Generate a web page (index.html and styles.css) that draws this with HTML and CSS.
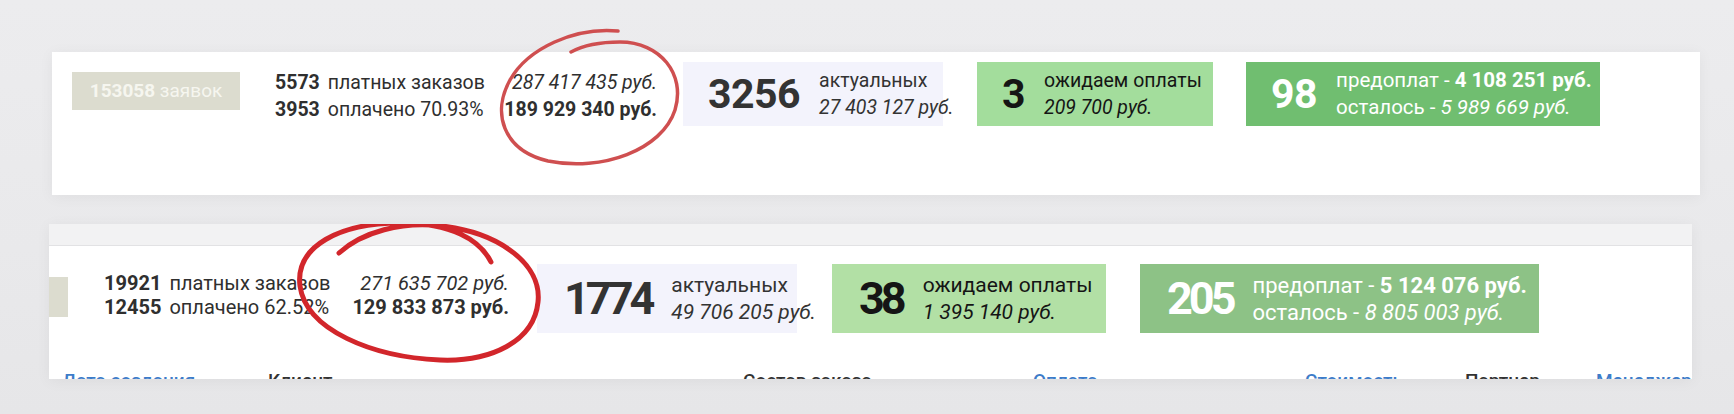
FILE: index.html
```html
<!DOCTYPE html>
<html lang="ru">
<head>
    <meta charset="UTF-8">
    <title>Статистика заказов</title>
    <link rel="stylesheet" href="styles.css">
</head>
<body>
    <div class="page">
        <section class="panel panel-top">
            <div class="stats">
                <div class="requests"><b>153058</b> заявок</div>
                <div class="orders">
                    <b>5573</b><span>платных заказов</span><i>287 417 435 руб.</i>
                    <b>3953</b><span>оплачено 70.93%</span><b class="sum">189 929 340 руб.</b>
                </div>
                <div class="card card-active">
                    <div class="card-num">3256</div>
                    <div class="card-text">актуальных<br><i>27 403 127 руб.</i></div>
                </div>
                <div class="card card-waiting">
                    <div class="card-num">3</div>
                    <div class="card-text">ожидаем оплаты<br><i>209 700 руб.</i></div>
                </div>
                <div class="card card-prepaid">
                    <div class="card-num">98</div>
                    <div class="card-text">предоплат - <b>4 108 251 руб.</b><br>осталось - <i>5 989 669 руб.</i></div>
                </div>
            </div>
            <!-- hand-drawn marker circle -->
            <svg class="mark mark-top" width="200" height="150" viewBox="486 22 200 150">
                <path d="M618,31 C575,27 528,48 510,80 C492,112 502,150 548,161 C602,172 662,150 675,110 C686,74 660,42 620,42 C600,42 582,46 571,52"/>
            </svg>
        </section>

        <section class="panel panel-bottom">
            <div class="panel-head"></div>
            <div class="stats">
                <div class="requests"><b>82110</b> заявок</div>
                <div class="orders">
                    <b>19921</b><span>платных заказов</span><i>271 635 702 руб.</i>
                    <b>12455</b><span>оплачено 62.52%</span><b class="sum">129 833 873 руб.</b>
                </div>
                <div class="card card-active">
                    <div class="card-num">1774</div>
                    <div class="card-text">актуальных<br><i>49 706 205 руб.</i></div>
                </div>
                <div class="card card-waiting">
                    <div class="card-num">38</div>
                    <div class="card-text">ожидаем оплаты<br><i>1 395 140 руб.</i></div>
                </div>
                <div class="card card-prepaid">
                    <div class="card-num">205</div>
                    <div class="card-text">предоплат - <b>5 124 076 руб.</b><br>осталось - <i>8 805 003 руб.</i></div>
                </div>
            </div>
            <div class="table-head">
                <span class="col col-date link">Дата создания</span>
                <span class="col col-client">Клиент</span>
                <span class="col col-items">Состав заказа</span>
                <span class="col col-pay link">Оплата</span>
                <span class="col col-cost link">Стоимость</span>
                <span class="col col-partner">Партнер</span>
                <span class="col col-manager link">Менеджер</span>
            </div>
            <svg class="mark mark-bottom" width="260" height="150" viewBox="290 218 260 150">
                <path d="M339,253 C362,232 402,221 442,226 C502,233 542,266 538,302 C534,342 490,362 440,360 C372,357 306,330 300,286 C295,246 340,223 400,223 C452,223 480,240 491,262"/>
            </svg>
        </section>
    </div>
</body>
</html>
```

FILE: styles.css
```css
body {
    margin: 0;
    font-family: Roboto, "Noto Sans", sans-serif;
    color: #2f2f2f;
    background: linear-gradient(180deg, #ececee 0%, #e9e9eb 60%, #e6e6e8 100%);
    height: 414px;
    overflow: hidden;
}

.page {
    padding: 52px 0 0 52px;
}

.panel {
    position: relative;
    background-color: #fff;
    box-shadow: 0 2px 14px rgba(0, 0, 0, 0.05);
}

.panel-top {
    width: 1648px;
    height: 143px;
    margin-bottom: 29px;
}

.panel-bottom {
    width: 1643px;
    height: 155px;
    margin-left: -3px;
    overflow: hidden;
}

.panel-head {
    height: 21px;
    background-color: #f2f2f3;
    border-bottom: 1px solid #e2e2e4;
}

.stats {
    display: flex;
    align-items: flex-start;
}

.panel-top .stats {
    padding: 10px 0 0 20px;
}

.panel-bottom .stats {
    padding: 18px 0 0 0;
}

/* requests badge */
.requests {
    flex: none;
    box-sizing: border-box;
    background-color: #dcdccf;
    color: #f6f6ef;
    font-size: 19px;
    line-height: 38px;
    text-align: center;
}

.panel-top .requests {
    width: 168px;
    height: 38px;
    margin-top: 10px;
}

.panel-bottom .requests {
    width: 170px;
    height: 40px;
    margin-top: 13px;
    margin-left: -151px;
}

/* orders summary */
.orders {
    flex: none;
    display: grid;
    grid-template-columns: auto auto 1fr;
    column-gap: 8px;
}

.orders i {
    text-align: right;
}

.orders .sum {
    text-align: right;
}

.panel-top .orders {
    width: 382px;
    margin: 7px 0 0 35px;
    font-size: 19.5px;
    line-height: 27px;
}

.panel-bottom .orders {
    width: 405px;
    margin: 7px 0 0 36px;
    font-size: 20px;
    line-height: 24px;
}

/* counters */
.card {
    flex: none;
    box-sizing: border-box;
    display: flex;
    align-items: center;
    white-space: nowrap;
}

.card-num {
    font-weight: bold;
}

.panel-top .card {
    height: 64px;
    padding-left: 25px;
}

.panel-top .card-num {
    font-size: 41px;
    letter-spacing: -0.5px;
    margin-right: 19px;
}

.panel-top .card-text {
    font-size: 19.5px;
    line-height: 27px;
}

.panel-bottom .card {
    height: 69px;
    padding-left: 27px;
}

.panel-bottom .card-num {
    font-size: 45px;
    letter-spacing: -4px;
    margin-right: 20px;
}

.panel-bottom .card-text {
    font-size: 21px;
    line-height: 27px;
}

.panel-top .card-prepaid .card-text {
    font-size: 20.5px;
}

.panel-bottom .card-prepaid .card-text {
    font-size: 22px;
}

.card-active {
    background-color: #f3f3fc;
    color: #333;
}

.card-waiting {
    color: #151515;
}

.card-prepaid {
    color: #fff;
}

.panel-top .card-active { width: 260px; margin-left: 26px; }
.panel-top .card-waiting { width: 236px; margin-left: 34px; background-color: #a3dd9c; }
.panel-top .card-prepaid { width: 354px; margin-left: 33px; background-color: #70be70; }

.panel-bottom .card-active { width: 260px; margin-left: 28px; }
.panel-bottom .card-waiting { width: 274px; margin-left: 35px; background-color: #b2e0a5; }
.panel-bottom .card-prepaid { width: 399px; margin-left: 34px; background-color: #8dc286; }

/* table header, cut by the panel edge */
.table-head {
    display: flex;
    margin-top: 37px;
    font-size: 19px;
    line-height: 22px;
    font-weight: 500;
    color: #333;
    white-space: nowrap;
}

.col {
    flex: none;
}

.link {
    color: #3d7cc9;
}

.col-date { width: 206px; margin-left: 13px; }
.col-client { width: 475px; }
.col-items { width: 290px; }
.col-pay { width: 272px; }
.col-cost { width: 160px; }
.col-partner { width: 131px; }

/* marker circles drawn over the numbers */
.mark {
    position: absolute;
    fill: none;
    stroke-linecap: round;
    pointer-events: none;
}

.mark-top {
    left: 434px;
    top: -30px;
    stroke: #cf4f50;
    stroke-width: 3.5;
}

.mark-bottom {
    left: 241px;
    top: -6px;
    stroke: #d2262b;
    stroke-width: 5;
}
```
